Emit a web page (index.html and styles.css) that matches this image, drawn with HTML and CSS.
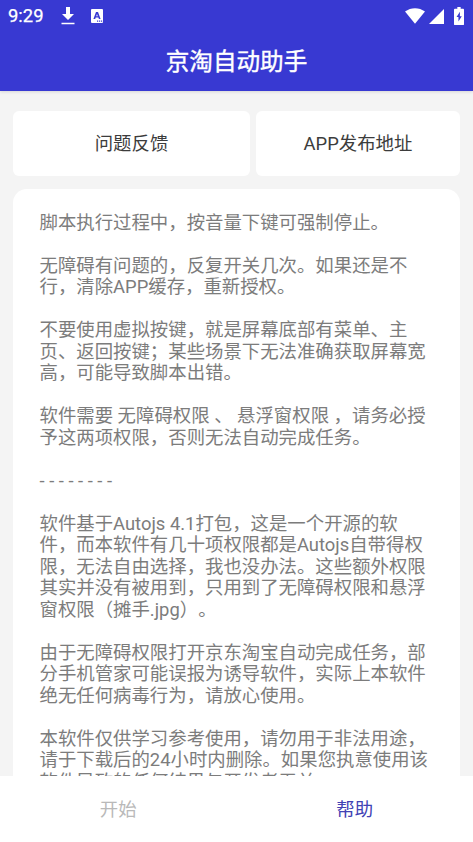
FILE: index.html
```html
<!DOCTYPE html>
<html lang="zh-CN">
<head>
<meta charset="utf-8">
<title>京淘自动助手</title>
<link rel="stylesheet" href="styles.css">
</head>
<body>
<div class="app">
  <header class="header">
    <div class="status">
      <span class="clock">9:29</span>
      <svg class="download" width="14" height="18" viewBox="0 0 14 18"><path d="M5 0h4v7h4L7 13 1 7h4zM.5 15.7h13v1.6H.5z"/></svg>
      <svg class="lang" width="12" height="14" viewBox="0 0 12 14"><path fill-rule="evenodd" d="M1 0h10a1 1 0 0 1 1 1v12a1 1 0 0 1-1 1H1a1 1 0 0 1-1-1V1a1 1 0 0 1 1-1zM5 3L2.400 10h1.800l.5-1.400h2.700L7.900 10h1.700L7 3zM6 4.900l.8 2.400H5.200zM6 11.500h1.200v1.200H6zM8 11.500h1.200v1.200H8zM10 11.500h1.200v1.200H10z"/></svg>
      <svg class="wifi" width="20" height="16" viewBox="0 0 20 16"><path d="M0 3.600C6-.9 14-.9 20 3.600L10 15.700z"/></svg>
      <svg class="signal" width="15" height="15" viewBox="0 0 15 15"><path d="M15 0v15H0z"/></svg>
      <svg class="battery" width="10" height="18" viewBox="0 0 9 17" preserveAspectRatio="none"><path fill-rule="evenodd" d="M3 0h3v1.700h2.200a.8.800 0 0 1 .8.800v13.700a.8.800 0 0 1-.8.800H.8a.8.800 0 0 1-.8-.8V2.500a.8.800 0 0 1 .8-.8H3zM5.300 4.500L2.300 9.500h1.700v4.200L7 8.700H5.300z"/></svg>
    </div>
    <h1 class="title">京淘自动助手</h1>
  </header>
  <main class="main">
    <div class="actions">
      <button class="action">问题反馈</button>
      <button class="action">APP发布地址</button>
    </div>
    <section class="card">
      <p>脚本执行过程中，按音量下键可强制停止。</p>
      <p>无障碍有问题的，反复开关几次。如果还是不<br>行，清除APP缓存，重新授权。</p>
      <p>不要使用虚拟按键，就是屏幕底部有菜单、主<br>页、返回按键；某些场景下无法准确获取屏幕宽<br>高，可能导致脚本出错。</p>
      <p>软件需要 无障碍权限 、 悬浮窗权限 ，请务必授<br>予这两项权限，否则无法自动完成任务。</p>
      <p>- - - - - - - -</p>
      <p>软件基于Autojs 4.1打包，这是一个开源的软<br>件，而本软件有几十项权限都是Autojs自带得权<br>限，无法自由选择，我也没办法。这些额外权限<br>其实并没有被用到，只用到了无障碍权限和悬浮<br>窗权限（摊手.jpg）。</p>
      <p>由于无障碍权限打开京东淘宝自动完成任务，部<br>分手机管家可能误报为诱导软件，实际上本软件<br>绝无任何病毒行为，请放心使用。</p>
      <p>本软件仅供学习参考使用，请勿用于非法用途，<br>请于下载后的24小时内删除。如果您执意使用该<br>软件导致的任何结果与开发者无关。</p>
    </section>
  </main>
  <nav class="tabs">
    <button class="tab tab-muted">开始</button>
    <button class="tab tab-active">帮助</button>
  </nav>
</div>
</body>
</html>
```
FILE: styles.css
```css
* { box-sizing: border-box; }
body {
  margin: 0;
  font-family: Roboto, "Noto Sans CJK SC", sans-serif;
  color: #3c3c3c;
  text-spacing-trim: space-all;
}
button { border: 0; padding: 0; font: inherit; color: inherit; }
.app {
  width: 473px;
  height: 842px;
  display: flex;
  flex-direction: column;
  overflow: hidden;
  background: #f4f4f4;
}
.header {
  flex: none;
  height: 91px;
  background: #3839d2;
  color: #fff;
  box-shadow: 0 1px 3px rgba(0, 0, 0, .12);
}
.status {
  height: 32px;
  padding: 0 9px 0 8px;
  display: flex;
  align-items: center;
  fill: #fff;
}
.clock {
  width: 53px;
  font-size: 18.4px;
  line-height: 32px;
  -webkit-text-stroke: .25px #fff;
}
.lang { margin-left: 16px; }
.wifi { margin-left: auto; }
.signal { margin: 1px 0 0 4px; }
.battery { margin: -1px 0 0 10px; }
.title {
  margin: 0;
  text-align: center;
  font-size: 23.6px;
  font-weight: 400;
  line-height: 60px;
  -webkit-text-stroke: .4px #fff;
}
.main {
  flex: 1;
  min-height: 0;
  padding: 20px 13px 0;
  overflow: hidden;
}
.actions { display: grid; grid-template-columns: 237px 204px; gap: 6px; }
.action {
  height: 65px;
  padding-bottom: 3px;
  border-radius: 6px;
  background: #fff;
  font-size: 18.4px;
}
.card {
  margin-top: 13px;
  padding: 22.5px 0 0 26.5px;
  border-radius: 14px;
  background: #fff;
  color: #7c7c7c;
  font-size: 18.4px;
  line-height: 21.5px;
  white-space: nowrap;
}
.card p { margin: 0 0 21.5px; }
.tabs {
  flex: none;
  height: 66px;
  display: grid;
  grid-template-columns: 1fr 1fr;
  background: #fff;
}
.tab { padding-bottom: 2px; background: none; font-size: 18.4px; }
.tab-muted { color: #b9b9b9; }
.tab-active { color: #4142b4; }
```
